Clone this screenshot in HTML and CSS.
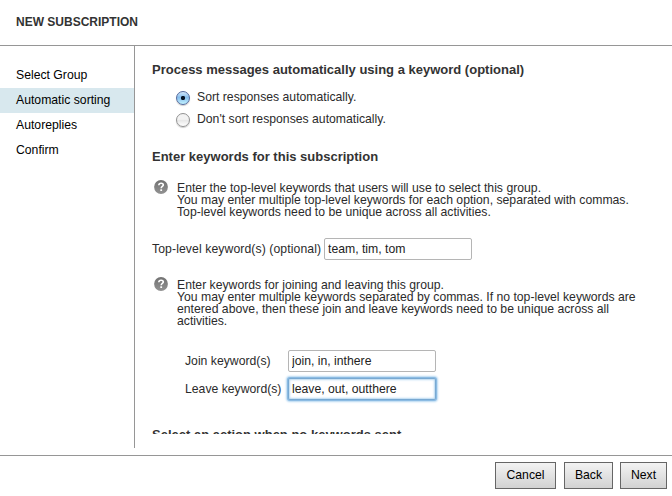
FILE: index.html
```html
<!DOCTYPE html>
<html lang="en">
<head>
<meta charset="utf-8">
<title>New subscription</title>
<link rel="stylesheet" href="styles.css">
</head>
<body>
<div class="dialog">
  <header class="header"><h1 class="title">NEW SUBSCRIPTION</h1></header>
  <div class="body">
    <nav class="steps">
      <a class="step">Select Group</a>
      <a class="step active">Automatic sorting</a>
      <a class="step">Autoreplies</a>
      <a class="step">Confirm</a>
    </nav>
    <main class="content">
      <h2 class="heading">Process messages automatically using a keyword (optional)</h2>
      <div class="choices">
        <label class="choice"><input class="radio" type="radio" name="sort" checked><span>Sort responses automatically.</span></label>
        <label class="choice"><input class="radio" type="radio" name="sort"><span>Don't sort responses automatically.</span></label>
      </div>
      <h2 class="heading heading-enter">Enter keywords for this subscription</h2>
      <div class="help">
        <svg class="help-icon" viewBox="0 0 14 14"><defs><linearGradient id="g" x2="0" y2="1"><stop stop-color="#727272"/><stop offset="1" stop-color="#929292"/></linearGradient></defs><circle cx="7" cy="7" r="6.9" fill="url(#g)"/><path d="M4.8 5.2C4.9 3.7 5.9 3.2 7.1 3.2c1.3 0 2.2.7 2.2 1.8 0 1.4-2.1 1.5-2.1 3.2" fill="none" stroke="#fff" stroke-width="1.6"/><rect x="6.3" y="9.3" width="1.8" height="1.7" fill="#fff"/></svg>
        <p class="help-text">Enter the top-level keywords that users will use to select this group.<br>You may enter multiple top-level keywords for each option, separated with commas.<br>Top-level keywords need to be unique across all activities.</p>
      </div>
      <div class="field field-top">
        <label for="top">Top-level keyword(s) (optional)</label>
        <input class="input" id="top" type="text" value="team, tim, tom">
      </div>
      <div class="help">
        <svg class="help-icon" viewBox="0 0 14 14"><circle cx="7" cy="7" r="6.9" fill="url(#g)"/><path d="M4.8 5.2C4.9 3.7 5.9 3.2 7.1 3.2c1.3 0 2.2.7 2.2 1.8 0 1.4-2.1 1.5-2.1 3.2" fill="none" stroke="#fff" stroke-width="1.6"/><rect x="6.3" y="9.3" width="1.8" height="1.7" fill="#fff"/></svg>
        <p class="help-text">Enter keywords for joining and leaving this group.<br>You may enter multiple keywords separated by commas. If no top-level keywords are<br>entered above, then these join and leave keywords need to be unique across all<br>activities.</p>
      </div>
      <div class="pair">
        <div class="field"><label for="join">Join keyword(s)</label><input class="input" id="join" type="text" value="join, in, inthere"></div>
        <div class="field"><label for="leave">Leave keyword(s)</label><input class="input focused" id="leave" type="text" value="leave, out, outthere"></div>
      </div>
      <h2 class="heading">Select an action when no keywords sent</h2>
    </main>
  </div>
  <footer class="footer">
    <button class="button cancel">Cancel</button>
    <button class="button back">Back</button>
    <button class="button next">Next</button>
  </footer>
</div>
</body>
</html>
```
FILE: styles.css
```css
* { box-sizing: border-box; }
body { margin: 0; background: #fff; color: #2b2b2b; font: 12.22px/14px "Liberation Sans", Arial, sans-serif; }
h1, h2, p { margin: 0; }
.dialog { display: flex; flex-direction: column; width: 672px; height: 496px; overflow: hidden; }
.header { height: 46px; padding: 15px 16px 0; border-bottom: 1px solid #969696; }
.title { font-size: 12px; line-height: 14px; color: #333; }
.body { display: flex; height: 402px; }
.steps { flex: none; width: 135px; padding-top: 17px; border-right: 1px solid #969696; }
.step { display: block; height: 25px; padding-left: 16px; line-height: 25px; color: #000; }
.active { background: #d8e8ee; }
.content { flex: 1; height: 388px; padding: 17px 0 0 17px; overflow: hidden; }
.heading { font-size: 13px; line-height: 14px; color: #333; white-space: nowrap; }
.choices { margin: 10px 0 19px 24px; }
.choice { display: flex; height: 22px; gap: 7px; line-height: 20px; }
.radio { appearance: none; flex: none; width: 14px; height: 14px; margin: 4px 0 0; border: 1px solid #929292; border-radius: 50%; background: linear-gradient(#f3f3f3 45%, #e6e6e6 50%, #fff); box-shadow: 0 1px 1px #ccc; }
.radio:checked { border-color: #53699d; background: radial-gradient(circle at 50% 50%, #071425 0 1.8px, transparent 2.5px), linear-gradient(#d2e7fa, #86bdec 45%, #c2f2ff); }
.help { display: flex; gap: 9px; margin-left: 2px; }
.heading-enter { margin-bottom: 18px; }
.help-icon { flex: none; width: 14px; height: 14px; margin-top: -2px; }
.help-text { line-height: 12px; white-space: nowrap; }
.field { display: flex; height: 22px; align-items: center; white-space: nowrap; }
.field label { flex: none; }
.field-top { margin: 20px 0 19px; }
.field-top label { width: 172px; letter-spacing: 0.09px; }
.input { width: 148px; height: 22px; margin: 0; padding: 0 3px; border: 1px solid #b5b5b5; border-radius: 2px; outline: 0; color: #222; background: #fff; font: inherit; }
.focused { border-color: #78a9d2; box-shadow: 0 0 0 1px #8bbbe3, 0 0 2px 2px #b5d7f1, inset 0 0 2px 1px #b5d7f1; }
.pair { display: grid; gap: 6px; margin: 23px 0 28px 33px; }
.pair label { width: 103px; }
.footer { display: flex; flex: none; height: 41px; margin-top: 7px; padding: 6px 5px 0 0; justify-content: flex-end; border-top: 1px solid #969696; }
.button { height: 27px; margin: 0 0 0 8px; padding: 0 0 1px; border: 1px solid #666; background: linear-gradient(#f3f3f3, #d2d2d2); color: #000; font: inherit; }
.cancel { width: 61px; }
.back { width: 49px; }
.next { width: 47px; margin-left: 7px; }
```
